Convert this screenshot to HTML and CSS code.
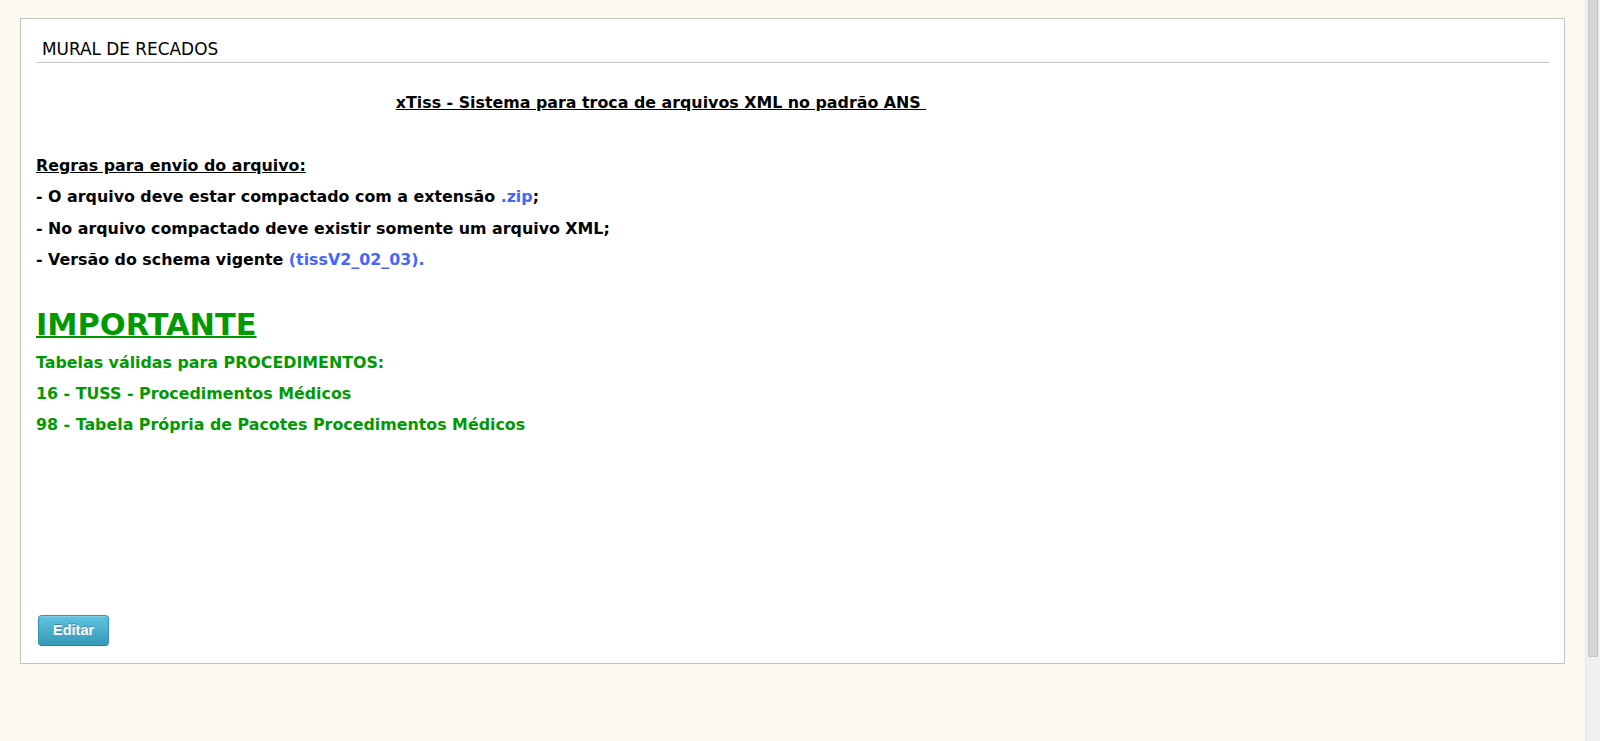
FILE: index.html
```html
<!DOCTYPE html>
<html lang="pt-BR">
<head>
<meta charset="utf-8">
<title>Mural de Recados</title>
<link rel="stylesheet" href="styles.css">
</head>
<body>
<div class="viewport">
  <main class="page">
    <section class="mural">
      <h2 class="mural-title">MURAL DE RECADOS</h2>
      <div class="mural-body">
        <div class="headline"><u>xTiss - Sistema para troca de arquivos XML no padrão ANS&nbsp;</u></div>
        <div class="rules">
          <div class="line"><u>Regras para envio do arquivo:</u></div>
          <div class="line">- O arquivo deve estar compactado com a extensão <span class="blue">.zip</span>;</div>
          <div class="line">- No arquivo compactado deve existir somente um arquivo XML;</div>
          <div class="line">- Versão do schema vigente <span class="blue">(tissV2_02_03).</span></div>
        </div>
        <div class="important">
          <div class="important-title"><u>IMPORTANTE</u></div>
          <div class="line">Tabelas válidas para PROCEDIMENTOS:</div>
          <div class="line">16 - TUSS - Procedimentos Médicos</div>
          <div class="line">98 - Tabela Própria de Pacotes Procedimentos Médicos</div>
        </div>
      </div>
      <div class="actions">
        <button class="btn-info" type="button">Editar</button>
      </div>
    </section>
  </main>
  <div class="scrollbar"><div class="thumb"></div></div>
</div>
</body>
</html>
```
FILE: styles.css
```css
html, body {
  margin: 0;
  padding: 0;
  height: 741px;
  overflow: hidden;
}
body {
  background: #fcf9ee;
  font-family: "DejaVu Sans", Verdana, sans-serif;
  color: #000;
}
.viewport {
  display: flex;
  height: 741px;
}
.page {
  flex: 1;
  padding: 18px 20px 0 20px;
  min-width: 0;
}
.scrollbar {
  width: 15px;
  flex: none;
  background: #f0f0f0;
  border-left: 1px solid #e6e6e6;
  box-sizing: border-box;
  padding: 0 2px 0 2px;
}
.thumb {
  height: 657px;
  background: #d6d6d6;
  border: 1px solid #c4c4c4;
  border-top: none;
  box-sizing: border-box;
  border-radius: 0 0 2px 2px;
}
.mural {
  background: #fff;
  border: 1px solid #c3c3c3;
  padding: 20px 15px 17px 15px;
}
.mural-title {
  margin: 0;
  padding: 0 0 3px 6px;
  font-weight: normal;
  font-size: 16.9px;
  line-height: 20px;
  border-bottom: 1px solid #c8c8c8;
}
.mural-body {
  font-weight: bold;
  font-size: 15.85px;
}
.headline {
  width: 1250px;
  text-align: center;
  margin-top: 30px;
  line-height: 20px;
}
.rules {
  margin-top: 37px;
}
.line {
  line-height: 31.3px;
  white-space: nowrap;
}
.blue {
  color: #4466ff;
}
.important {
  margin-top: 32px;
  color: #009900;
}
.important-title {
  font-size: 30.4px;
  line-height: 36px;
  margin-bottom: 3.5px;
}
.important-title u {
  text-decoration-thickness: 2px;
}
.actions {
  margin-top: 174px;
  padding-left: 2px;
}
.btn-info {
  display: block;
  height: 31px;
  padding: 0 14px;
  font-family: "Liberation Sans", Arial, sans-serif;
  font-weight: bold;
  font-size: 14.5px;
  line-height: 29px;
  color: #fff;
  text-shadow: 0 -1px 0 rgba(0, 0, 0, 0.25);
  background: linear-gradient(to bottom, #5fc4e1, #3598b7);
  border: 1px solid #3a93b0;
  border-bottom-color: #2a7d99;
  border-radius: 4px;
  box-shadow: inset 0 1px 0 rgba(255, 255, 255, 0.2), 0 1px 2px rgba(0, 0, 0, 0.05);
  cursor: pointer;
}
```
